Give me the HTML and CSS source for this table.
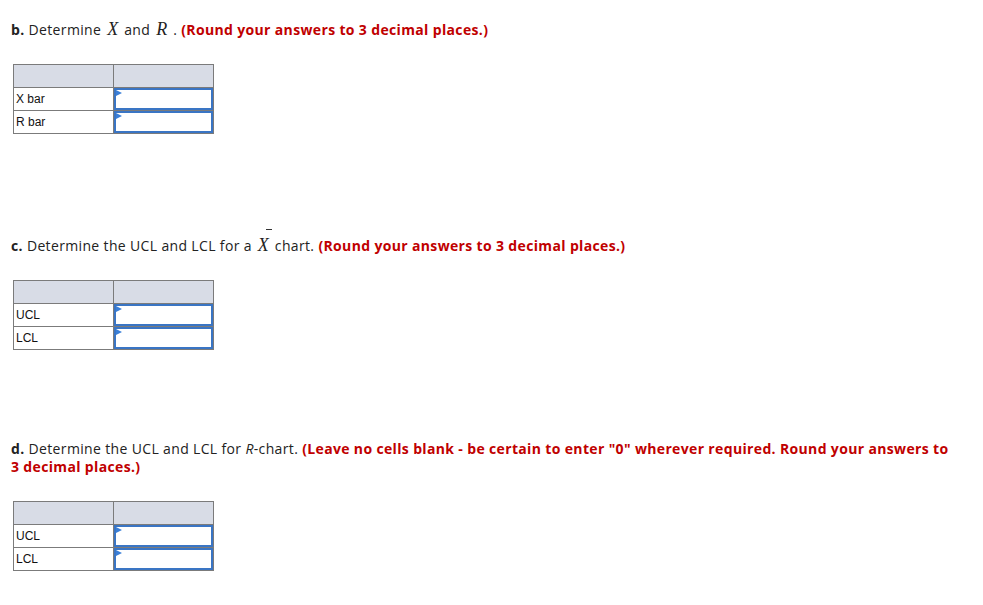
FILE: index.html
```html
<!DOCTYPE html>
<html>
<head>
<meta charset="utf-8">
<link rel="stylesheet" href="styles.css">
</head>
<body>
<div class="page">
  <section class="part part-b">
    <p class="q"><b>b.</b> Determine <span class="m">X</span> and <span class="m">R</span> . <span class="hint">(Round your answers to 3 decimal places.)</span></p>
    <table class="grid">
      <tr class="head"><td></td><td></td></tr>
      <tr><td class="lbl">X bar</td><td class="in"><div class="box"></div></td></tr>
      <tr><td class="lbl">R bar</td><td class="in"><div class="box"></div></td></tr>
    </table>
  </section>
  <section class="part part-c">
    <p class="q"><b>c.</b> Determine the UCL and LCL for a <span class="m bar">X</span> chart. <span class="hint">(Round your answers to 3 decimal places.)</span></p>
    <table class="grid">
      <tr class="head"><td></td><td></td></tr>
      <tr><td class="lbl">UCL</td><td class="in"><div class="box"></div></td></tr>
      <tr><td class="lbl">LCL</td><td class="in"><div class="box"></div></td></tr>
    </table>
  </section>
  <section class="part part-d">
    <p class="q wide"><b>d.</b> Determine the UCL and LCL for <i>R</i>-chart. <span class="hint">(Leave no cells blank - be certain to enter "0" wherever required. Round your answers to 3 decimal places.)</span></p>
    <table class="grid">
      <tr class="head"><td></td><td></td></tr>
      <tr><td class="lbl">UCL</td><td class="in"><div class="box"></div></td></tr>
      <tr><td class="lbl">LCL</td><td class="in"><div class="box"></div></td></tr>
    </table>
  </section>
</div>
</body>
</html>
```

FILE: styles.css
```css
html, body {
  margin: 0;
  padding: 0;
  background: #fff;
}
.page {
  padding: 21px 0 0 11px;
  font-family: "Open Sans", Lato, sans-serif;
  font-size: 14px;
  letter-spacing: 0.35px;
  color: #222;
}
.q {
  margin: 0;
  line-height: 18px;
  width: 940px;
}
.q b {
  font-weight: 700;
}
.hint {
  color: #c00000;
  font-weight: 700;
}
.m {
  font-family: "Liberation Serif", serif;
  font-style: italic;
  font-size: 18px;
  line-height: 12px;
  letter-spacing: 0;
  margin: 0 2px;
}
.bar {
  position: relative;
}
.bar::before {
  content: "";
  position: absolute;
  left: 8px;
  top: -6px;
  width: 6px;
  height: 1px;
  background: #333;
}
.grid {
  border-collapse: collapse;
  margin: 25px 0 0 2px;
  font-family: "Liberation Sans", Arial, sans-serif;
  font-size: 12px;
  letter-spacing: 0;
  color: #111;
}
.grid td {
  border: 1px solid #7b7b7b;
  width: 99px;
  height: 22px;
  padding: 0;
  box-sizing: content-box;
}
.grid .head td {
  background: #d8dce6;
}
.grid .lbl {
  padding-left: 2px;
  width: 97px;
}
.grid .in {
  position: relative;
}
.box {
  height: 22px;
  box-sizing: border-box;
  border: 2px solid #3a75c4;
  position: relative;
}
.box::before {
  content: "";
  position: absolute;
  left: 0;
  top: 0;
  border-left: 6px solid #3a7fd8;
  border-top: 3px solid transparent;
  border-bottom: 3px solid transparent;
}
.part-c {
  margin-top: 103px;
}
.part-d {
  margin-top: 90px;
}
```
